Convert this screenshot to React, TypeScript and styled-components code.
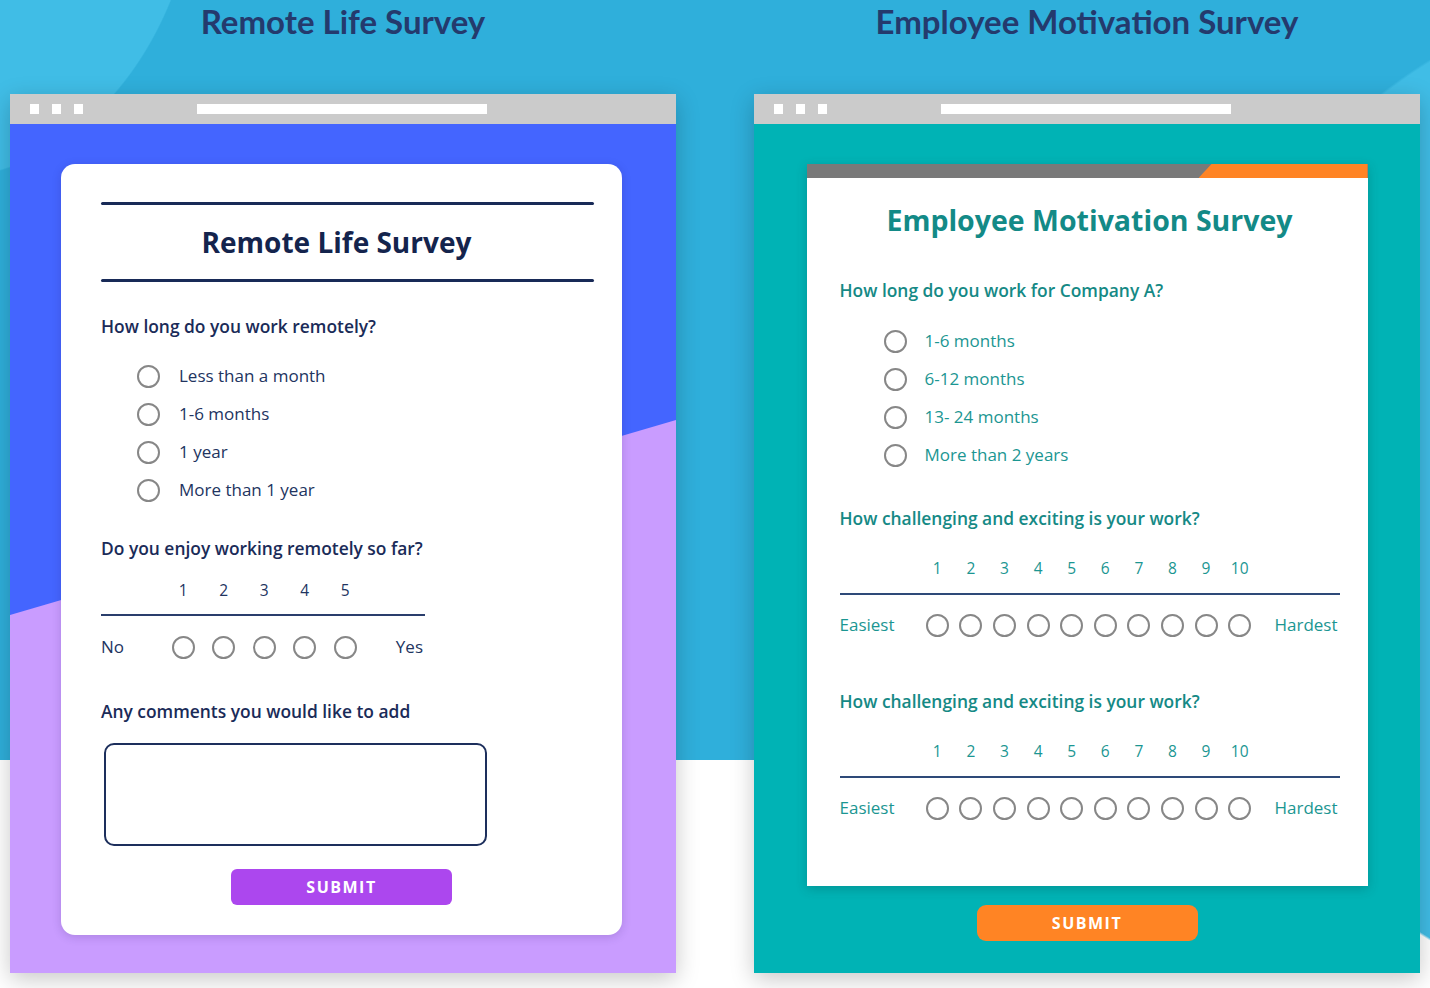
import React from 'react';
import styled, { createGlobalStyle } from 'styled-components';

type Tone = 'navy' | 'teal';

const palette = {
  navy: { heading: '#1a2b58', text: '#22345f', line: '#2a3e6c' },
  teal: { heading: '#158985', text: '#1b9692', line: '#2e4a78' },
};

const GlobalStyle = createGlobalStyle`
  html, body {
    margin: 0;
    padding: 0;
  }
  body {
    width: 1430px;
    height: 988px;
    overflow: hidden;
    background: #fff;
    font-family: Lato, "Open Sans", "Liberation Sans", sans-serif;
    -webkit-font-smoothing: antialiased;
  }
  * { box-sizing: border-box; }
`;

const Page = styled.div`
  width: 1430px;
  height: 988px;
  padding: 0 10px;
  display: grid;
  grid-template-columns: 666px 666px;
  grid-template-rows: 94px 879px;
  column-gap: 78px;
  background:
    radial-gradient(260px 330px at -60px -150px, #40bde6 99.5%, transparent 100%),
    radial-gradient(517px 517px at 1700px 500px, #40bde6 99.5%, transparent 100%),
    linear-gradient(#2fafdb, #2fafdb) top left / 100% 760px no-repeat,
    #fff;
`;

const PageTitle = styled.h1`
  margin: 0;
  padding-top: 5px;
  text-align: center;
  font-size: 33px;
  line-height: 33px;
  font-weight: 700;
  color: #243a6d;
`;

const Window = styled.div`
  display: flex;
  flex-direction: column;
  box-shadow: 0 6px 22px rgba(0, 0, 0, 0.22);
`;

const Chrome = styled.div`
  height: 30px;
  flex: none;
  display: flex;
  align-items: center;
  gap: 13px;
  padding-left: 20px;
  background: #cbcbcb;
`;

const ChromeDot = styled.span`
  width: 9px;
  height: 10px;
  background: #fff;
`;

const AddressBar = styled.span`
  width: 290px;
  height: 10px;
  margin-left: 101px;
  background: #fff;
`;

const RemoteViewport = styled.div`
  flex: 1;
  position: relative;
  padding: 40px 0 0 51px;
  background: #4465ff;

  &::before {
    content: '';
    position: absolute;
    inset: 0;
    background: #c99cff;
    clip-path: polygon(0 491px, 100% 296px, 100% 100%, 0 100%);
  }
`;

const MotivationViewport = styled.div`
  flex: 1;
  display: flex;
  flex-direction: column;
  align-items: center;
  padding-top: 40px;
  background: #00b3b5;
`;

const RemoteCard = styled.div`
  position: relative;
  width: 561px;
  height: 771px;
  padding: 0 28px 0 40px;
  display: flex;
  flex-direction: column;
  background: #fff;
  border-radius: 14px;
  box-shadow: 0 2px 10px rgba(40, 20, 90, 0.18);
  font-family: "Open Sans", Lato, sans-serif;
`;

const MotivationCard = styled.div`
  width: 561px;
  height: 722px;
  background: #fff;
  box-shadow: 0 3px 10px rgba(0, 60, 60, 0.25);
  font-family: "Open Sans", Lato, sans-serif;
`;

const Stripe = styled.div`
  position: relative;
  height: 14px;
  background: #797979;

  &::after {
    content: '';
    position: absolute;
    top: 0;
    right: 0;
    bottom: 0;
    width: 169px;
    background: #ff8424;
    clip-path: polygon(13px 0, 100% 0, 100% 100%, 0 100%);
  }
`;

const CardBody = styled.div`
  padding: 0 28px 0 33px;
  display: flex;
  flex-direction: column;
`;

const Rule = styled.div<{ $top: number }>`
  height: 3px;
  margin-top: ${p => p.$top}px;
  border-radius: 2px;
  background: #182a57;
`;

const CardTitle = styled.h2<{ $tone: Tone; $top: number; $shift?: number }>`
  margin: ${p => p.$top}px 0 0;
  padding-right: ${p => p.$shift ?? 0}px;
  text-align: center;
  font-size: ${p => (p.$tone === 'navy' ? 28 : 28.5)}px;
  line-height: 34px;
  font-weight: 700;
  color: ${p => (p.$tone === 'navy' ? '#14244d' : '#138a87')};
`;

const Question = styled.h3<{ $tone: Tone; $top: number }>`
  margin: ${p => p.$top}px 0 0;
  font-size: 17.4px;
  line-height: 20px;
  font-weight: 600;
  color: ${p => palette[p.$tone].heading};
`;

const OptionList = styled.ul<{ $top: number; $indent: number }>`
  list-style: none;
  margin: ${p => p.$top}px 0 0;
  padding: 0 0 0 ${p => p.$indent}px;
`;

const OptionRow = styled.li<{ $gap: number }>`
  height: 38px;
  display: flex;
  align-items: center;
  gap: ${p => p.$gap}px;
`;

const Radio = styled.span`
  width: 23px;
  height: 23px;
  flex: none;
  border: 2px solid #878787;
  border-radius: 50%;
  background: #fff;
`;

const OptionLabel = styled.span<{ $tone: Tone }>`
  font-size: 17px;
  line-height: 20px;
  color: ${p => palette[p.$tone].text};
`;

const ScaleBlock = styled.div<{ $width: number }>`
  width: ${p => p.$width}px;
  display: flex;
  flex-direction: column;
`;

const ScaleGrid = styled.div<{ $label: number; $step: number; $count: number; $top: number; $height: number }>`
  margin-top: ${p => p.$top}px;
  height: ${p => p.$height}px;
  display: grid;
  grid-template-columns: ${p => p.$label}px repeat(${p => p.$count}, ${p => p.$step}px) 1fr;
  align-items: center;
`;

const ScaleNumber = styled.span<{ $tone: Tone }>`
  justify-self: center;
  font-size: 15.5px;
  line-height: 20px;
  color: ${p => palette[p.$tone].text};
`;

const ScaleLine = styled.div<{ $tone: Tone; $top: number }>`
  height: 2px;
  margin-top: ${p => p.$top}px;
  background: ${p => palette[p.$tone].line};
`;

const ScaleRadio = styled(Radio)`
  justify-self: center;
`;

const EndLabel = styled.span<{ $tone: Tone; $end?: boolean }>`
  justify-self: ${p => (p.$end ? 'end' : 'start')};
  padding-right: ${p => (p.$end ? 2 : 0)}px;
  font-size: 17px;
  line-height: 20px;
  color: ${p => palette[p.$tone].text};
`;

const CommentBox = styled.textarea`
  width: 383px;
  height: 103px;
  margin: 22px 0 0 3px;
  resize: none;
  border: 2px solid #1d2f5c;
  border-radius: 10px;
  background: #fff;
  font: inherit;
  outline: none;
`;

const SubmitButton = styled.button<{ $color: string; $top: number; $left?: number }>`
  width: 221px;
  height: 36px;
  margin-top: ${p => p.$top}px;
  margin-left: ${p => p.$left ?? 0}px;
  align-self: ${p => (p.$left !== undefined ? 'flex-start' : 'center')};
  border: none;
  border-radius: ${p => (p.$left !== undefined ? 6 : 9)}px;
  background: ${p => p.$color};
  color: #fff;
  font-family: "Open Sans", Lato, sans-serif;
  font-size: 16px;
  font-weight: 700;
  letter-spacing: 1.5px;
  cursor: pointer;
`;

interface ScaleProps {
  tone: Tone;
  count: number;
  low: string;
  high: string;
  width: number;
  label: number;
  step: number;
  numbersTop: number;
  lineTop: number;
  rowTop: number;
}

const RatingScale: React.FC<ScaleProps> = ({ tone, count, low, high, width, label, step, numbersTop, lineTop, rowTop }) => {
  const values = Array.from({ length: count }, (_, i) => i + 1);
  return (
    <ScaleBlock $width={width}>
      <ScaleGrid $label={label} $step={step} $count={count} $top={numbersTop} $height={20}>
        <span />
        {values.map(v => (
          <ScaleNumber key={v} $tone={tone}>{v}</ScaleNumber>
        ))}
      </ScaleGrid>
      <ScaleLine $tone={tone} $top={lineTop} />
      <ScaleGrid $label={label} $step={step} $count={count} $top={rowTop} $height={24}>
        <EndLabel $tone={tone}>{low}</EndLabel>
        {values.map(v => (
          <ScaleRadio key={v} />
        ))}
        <EndLabel $tone={tone} $end>{high}</EndLabel>
      </ScaleGrid>
    </ScaleBlock>
  );
};

const BrowserChrome = () => (
  <Chrome>
    <ChromeDot />
    <ChromeDot />
    <ChromeDot />
    <AddressBar />
  </Chrome>
);

const remoteOptions = ['Less than a month', '1-6 months', '1 year', 'More than 1 year'];
const tenureOptions = ['1-6 months', '6-12 months', '13- 24 months', 'More than 2 years'];

export default function App() {
  return (
    <>
      <GlobalStyle />
      <Page>
        <PageTitle>Remote Life Survey</PageTitle>
        <PageTitle>Employee Motivation Survey</PageTitle>

        <Window>
          <BrowserChrome />
          <RemoteViewport>
            <RemoteCard>
              <Rule $top={38} />
              <CardTitle $tone="navy" $top={20} $shift={22}>Remote Life Survey</CardTitle>
              <Rule $top={20} />
              <Question $tone="navy" $top={34}>How long do you work remotely?</Question>
              <OptionList $top={21} $indent={36}>
                {remoteOptions.map(o => (
                  <OptionRow key={o} $gap={19}>
                    <Radio />
                    <OptionLabel $tone="navy">{o}</OptionLabel>
                  </OptionRow>
                ))}
              </OptionList>
              <Question $tone="navy" $top={29}>Do you enjoy working remotely so far?</Question>
              <RatingScale tone="navy" count={5} low="No" high="Yes" width={324} label={62} step={40.5} numbersTop={22} lineTop={14} rowTop={19} />
              <Question $tone="navy" $top={42}>Any comments you would like to add</Question>
              <CommentBox />
              <SubmitButton $color="#ac47ee" $top={23} $left={130}>SUBMIT</SubmitButton>
            </RemoteCard>
          </RemoteViewport>
        </Window>

        <Window>
          <BrowserChrome />
          <MotivationViewport>
            <MotivationCard>
              <Stripe />
              <CardBody>
                <CardTitle $tone="teal" $top={25}>Employee Motivation Survey</CardTitle>
                <Question $tone="teal" $top={43}>How long do you work for Company A?</Question>
                <OptionList $top={22} $indent={44}>
                  {tenureOptions.map(o => (
                    <OptionRow key={o} $gap={18}>
                      <Radio />
                      <OptionLabel $tone="teal">{o}</OptionLabel>
                    </OptionRow>
                  ))}
                </OptionList>
                <Question $tone="teal" $top={34}>How challenging and exciting is your work?</Question>
                <RatingScale tone="teal" count={10} low="Easiest" high="Hardest" width={500} label={81} step={33.6} numbersTop={30} lineTop={15} rowTop={18} />
                <Question $tone="teal" $top={54}>How challenging and exciting is your work?</Question>
                <RatingScale tone="teal" count={10} low="Easiest" high="Hardest" width={500} label={81} step={33.6} numbersTop={30} lineTop={15} rowTop={18} />
              </CardBody>
            </MotivationCard>
            <SubmitButton $color="#ff8424" $top={19}>SUBMIT</SubmitButton>
          </MotivationViewport>
        </Window>
      </Page>
    </>
  );
}
